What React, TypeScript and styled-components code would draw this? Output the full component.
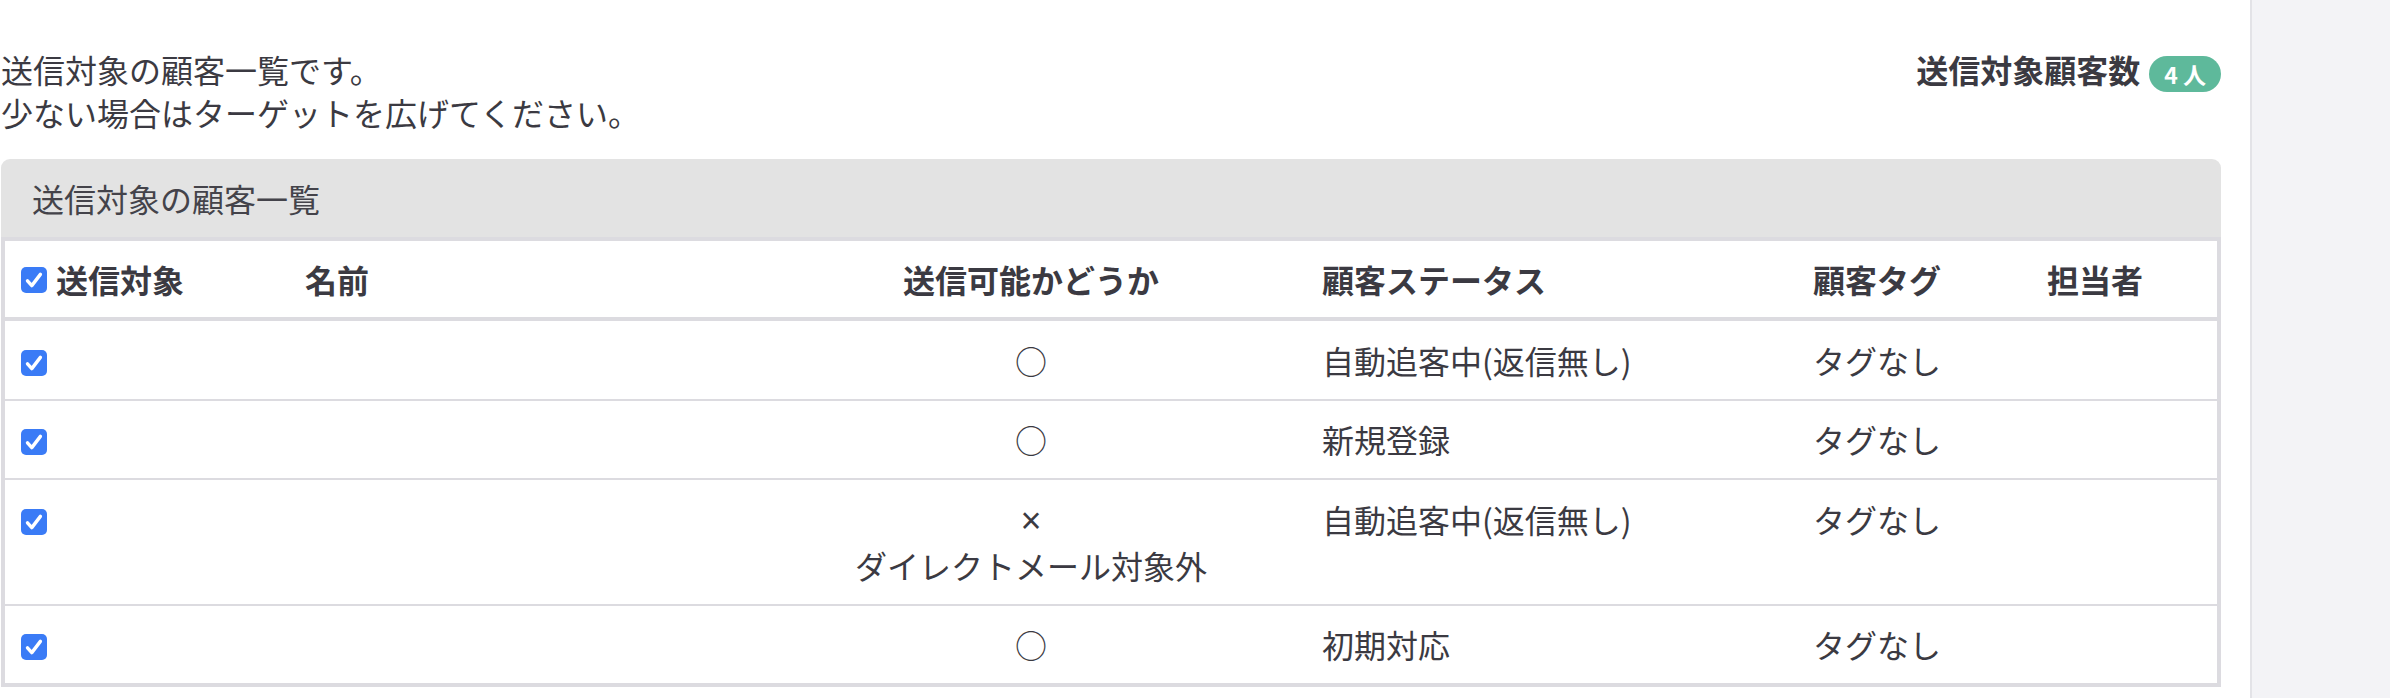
import React from 'react';
import styled, { createGlobalStyle } from 'styled-components';

// =============================================================================
// Constants
// =============================================================================

const TEXT = '#3b3a42';
const BORDER = '#dcdbe0';
const BLUE = '#3a7bf6';
const GREEN = '#5eb99b';

type Customer = {
  sendable: boolean;
  reason?: string;
  status: string;
  tag: string;
  owner?: string;
};

const customers: Customer[] = [
  { sendable: true, status: '自動追客中(返信無し)', tag: 'タグなし' },
  { sendable: true, status: '新規登録', tag: 'タグなし' },
  { sendable: false, reason: 'ダイレクトメール対象外', status: '自動追客中(返信無し)', tag: 'タグなし' },
  { sendable: true, status: '初期対応', tag: 'タグなし' },
];

const columns = [284, 467, 550, 491, 234, 186];

// =============================================================================
// Styled Components
// =============================================================================

const GlobalStyle = createGlobalStyle`
  html, body {
    margin: 0;
    padding: 0;
    background: #ffffff;
  }
  body {
    font-family: "Noto Sans CJK JP", "Noto Sans", sans-serif;
    color: ${TEXT};
  }
`;

const Page = styled.div`
  display: flex;
  min-height: 100vh;
`;

const Main = styled.main`
  flex: 1;
  min-width: 0;
  padding: 48px 29px 0 1px;
`;

const Sidebar = styled.aside`
  width: 138px;
  flex-shrink: 0;
  background: #f3f3f6;
  border-left: 2px solid #e3e3e7;
`;

const IntroRow = styled.div`
  display: flex;
  justify-content: space-between;
  align-items: flex-start;
`;

const Lead = styled.p`
  margin: 0;
  font-size: 32px;
  line-height: 43px;
`;

const Count = styled.div`
  display: flex;
  align-items: flex-start;
  gap: 9px;
  font-size: 32px;
  line-height: 43px;
  font-weight: bold;
`;

const Badge = styled.span`
  display: inline-flex;
  align-items: center;
  height: 36px;
  margin-top: 8px;
  padding: 0 15px;
  border-radius: 18px;
  background: ${GREEN};
  color: #ffffff;
  font-size: 23px;
  line-height: 1;
  font-weight: bold;
`;

const Panel = styled.section`
  margin-top: 25px;
  border-radius: 9px 9px 0 0;
  overflow: hidden;
`;

const PanelHeading = styled.div`
  background: #e3e3e3;
  padding: 17.5px 31px;
  font-size: 32px;
  line-height: 43px;
  color: #44434a;
`;

const Table = styled.table`
  width: 100%;
  table-layout: fixed;
  border-collapse: separate;
  border-spacing: 0;
  border: 4px solid ${BORDER};
  font-size: 32px;
`;

const Th = styled.th<{ center?: boolean }>`
  padding: 17px 16px 16px;
  height: 43px;
  line-height: 43px;
  vertical-align: top;
  text-align: ${(p) => (p.center ? 'center' : 'left')};
  font-weight: bold;
  white-space: nowrap;
  border-bottom: 4px solid ${BORDER};
`;

const Row = styled.tr`
  & + & > td {
    border-top: 2px solid ${BORDER};
  }
`;

const Td = styled.td<{ center?: boolean }>`
  padding: 16.5px 16px 17px;
  line-height: 44px;
  vertical-align: top;
  text-align: ${(p) => (p.center ? 'center' : 'left')};
  font-weight: normal;
`;

const HeadLabel = styled.span`
  display: inline-flex;
  align-items: center;
  vertical-align: top;
  height: 43px;
  gap: 9px;
`;

const Box = styled.span`
  display: inline-flex;
  width: 26px;
  height: 26px;
  border-radius: 5px;
  background: ${BLUE};
  vertical-align: middle;
  margin-top: -4px;
`;

const HeadBox = styled(Box)`
  margin-top: 0;
`;

const Cross = styled.span`
  font-family: "Liberation Sans", Arial, sans-serif;
  font-size: 36px;
`;

// =============================================================================
// Components
// =============================================================================

const Check = () => (
  <svg width="26" height="26" viewBox="0 0 26 26">
    <polyline
      points="6.5,13.8 10.8,18.6 19.4,7.4"
      fill="none"
      stroke="#ffffff"
      strokeWidth="3.4"
      strokeLinecap="round"
      strokeLinejoin="round"
    />
  </svg>
);

const App = () => (
  <>
    <GlobalStyle />
    <Page>
      <Main>
        <IntroRow>
          <Lead>
            送信対象の顧客一覧です。
            <br />
            少ない場合はターゲットを広げてください。
          </Lead>
          <Count>
            送信対象顧客数
            <Badge>4 人</Badge>
          </Count>
        </IntroRow>

        <Panel>
          <PanelHeading>送信対象の顧客一覧</PanelHeading>
          <Table>
            <colgroup>
              {columns.map((w, i) => (
                <col key={i} style={{ width: w }} />
              ))}
            </colgroup>
            <thead>
              <tr>
                <Th>
                  <HeadLabel>
                    <HeadBox>
                      <Check />
                    </HeadBox>
                    送信対象
                  </HeadLabel>
                </Th>
                <Th>名前</Th>
                <Th center>送信可能かどうか</Th>
                <Th>顧客ステータス</Th>
                <Th>顧客タグ</Th>
                <Th>担当者</Th>
              </tr>
            </thead>
            <tbody>
              {customers.map((c, i) => (
                <Row key={i}>
                  <Td>
                    <Box>
                      <Check />
                    </Box>
                  </Td>
                  <Td />
                  <Td center>
                    {c.sendable ? '○' : <Cross>×</Cross>}
                    {c.reason && (
                      <>
                        <br />
                        {c.reason}
                      </>
                    )}
                  </Td>
                  <Td>{c.status}</Td>
                  <Td>{c.tag}</Td>
                  <Td>{c.owner}</Td>
                </Row>
              ))}
            </tbody>
          </Table>
        </Panel>
      </Main>
      <Sidebar />
    </Page>
  </>
);

export default App;
